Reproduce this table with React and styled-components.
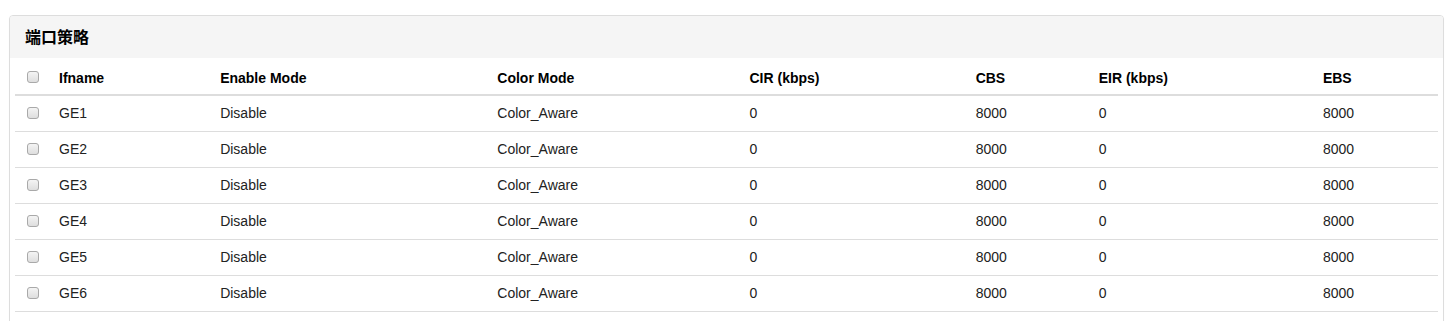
import React from "react";
import styled, { createGlobalStyle } from "styled-components";

const GlobalStyle = createGlobalStyle`
    *, *::before, *::after {
        box-sizing: border-box;
    }
    body {
        margin: 0;
        background: #ffffff;
        font-family: "Liberation Sans", Arial, "Noto Sans CJK SC", sans-serif;
        font-size: 14px;
        color: #333333;
    }
`;

const Page = styled.div`
    padding: 15px 5px 0 9px;
`;

const Panel = styled.div`
    border: 1px solid #dddddd;
    border-radius: 4px;
    background: #ffffff;
    box-shadow: 0 1px 1px rgba(0, 0, 0, 0.05);
`;

const PanelHeading = styled.div`
    height: 42px;
    display: flex;
    align-items: center;
    padding: 0 15px 3px;
    background: #f5f5f5;
    border-radius: 3px 3px 0 0;
`;

const PanelTitle = styled.h3`
    margin: 0;
    font-size: 16px;
    font-weight: bold;
    color: #000000;
    font-family: "Noto Sans CJK SC", "Liberation Sans", sans-serif;
`;

const PanelBody = styled.div`
    padding: 0 5px 20px;
`;

const Table = styled.table`
    width: 100%;
    border-collapse: collapse;
    table-layout: fixed;
`;

const HeadCell = styled.th`
    width: ${(props) => props.$w}px;
    height: 37px;
    padding: 3px 8px 0;
    text-align: ${(props) => (props.$center ? "center" : "left")};
    font-weight: bold;
    color: #000000;
    border-bottom: 2px solid #dddddd;
    vertical-align: middle;
`;

const Cell = styled.td`
    height: 36px;
    padding: 0 8px;
    text-align: ${(props) => (props.$center ? "center" : "left")};
    color: #222222;
    border-bottom: 1px solid #dddddd;
    vertical-align: middle;
`;

const Check = styled.span`
    display: inline-block;
    width: 12px;
    height: 12px;
    border: 1px solid #a9a9a9;
    border-radius: 3px;
    background: linear-gradient(#f4f4f4, #dedede);
    vertical-align: middle;
    margin-top: -3px;
`;

const columns = [
    { key: "cb", w: 36 },
    { key: "Ifname", w: 161 },
    { key: "Enable Mode", w: 277 },
    { key: "Color Mode", w: 252 },
    { key: "CIR (kbps)", w: 226 },
    { key: "CBS", w: 123 },
    { key: "EIR (kbps)", w: 224 },
    { key: "EBS", w: 123 },
];

const rows = [1, 2, 3, 4, 5, 6].map((n) => ({
    name: `GE${n}`,
    enable: "Disable",
    color: "Color_Aware",
    cir: "0",
    cbs: "8000",
    eir: "0",
    ebs: "8000",
}));

const App = () => {
    return (
        <>
            <GlobalStyle />
            <Page>
                <Panel>
                    <PanelHeading>
                        <PanelTitle>端口策略</PanelTitle>
                    </PanelHeading>
                    <PanelBody>
                        <Table>
                            <thead>
                                <tr>
                                    {columns.map((c) =>
                                        c.key === "cb" ? (
                                            <HeadCell key={c.key} $w={c.w} $center>
                                                <Check />
                                            </HeadCell>
                                        ) : (
                                            <HeadCell key={c.key} $w={c.w}>
                                                {c.key}
                                            </HeadCell>
                                        )
                                    )}
                                </tr>
                            </thead>
                            <tbody>
                                {rows.map((r) => (
                                    <tr key={r.name}>
                                        <Cell $center>
                                            <Check />
                                        </Cell>
                                        <Cell>{r.name}</Cell>
                                        <Cell>{r.enable}</Cell>
                                        <Cell>{r.color}</Cell>
                                        <Cell>{r.cir}</Cell>
                                        <Cell>{r.cbs}</Cell>
                                        <Cell>{r.eir}</Cell>
                                        <Cell>{r.ebs}</Cell>
                                    </tr>
                                ))}
                            </tbody>
                        </Table>
                    </PanelBody>
                </Panel>
            </Page>
        </>
    );
};

export default App;
